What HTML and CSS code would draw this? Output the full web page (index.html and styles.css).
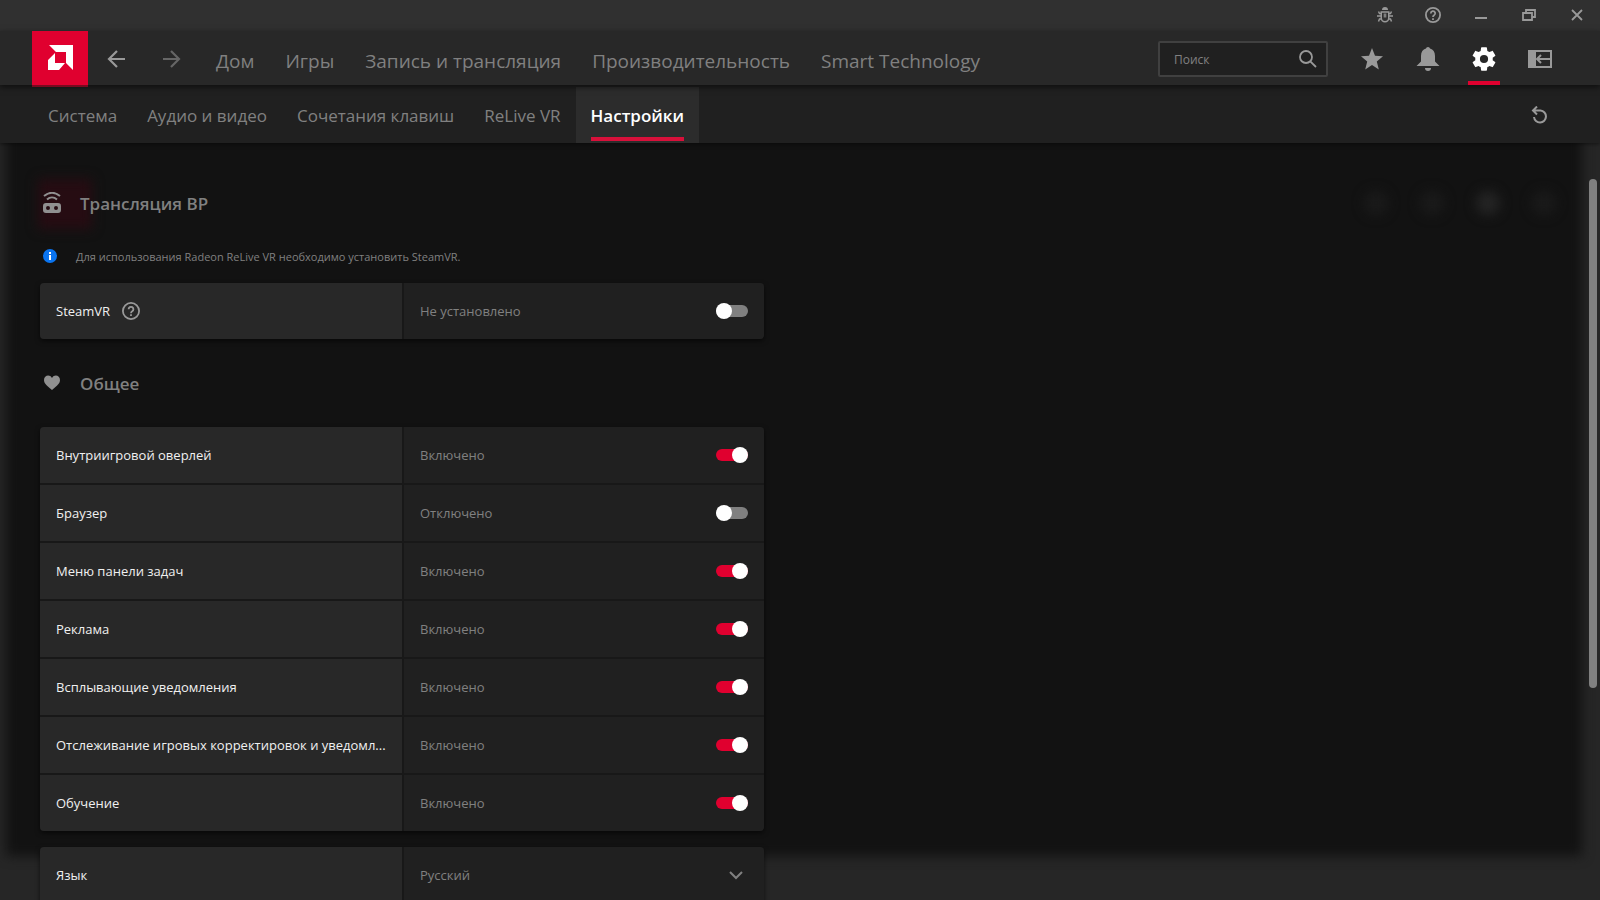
FILE: index.html
```
<!DOCTYPE html>
<html lang="ru">
<head>
    <meta charset="UTF-8">
    <meta name="viewport" content="width=device-width, initial-scale=1.0">
    <title>AMD Software</title>
    <link rel="stylesheet" href="styles.css">
</head>
<body>
    <div class="titlebar">
        <button aria-label="Сообщить об ошибке">
            <svg width="16" height="16" viewBox="0 0 16 16" fill="none" stroke="currentColor" stroke-width="1.500">
                <path d="M5 3a3 3 0 0 1 6 0z" fill="currentColor" stroke="none"/>
                <path d="M4.250 5h7.500v6a3.750 3.750 0 0 1-7.500 0z"/>
                <path d="M7.250 6.500v4M8.750 6.500v4" stroke-width="1"/>
                <path d="M4 6.500H2.500L1.500 4.500M12 6.500h1.500l1-2M0 9h4M12 9h4M4.500 12h-2l-1 2.500M11.500 12h2l1 2.500"/>
            </svg>
        </button>
        <button aria-label="Справка">
            <svg width="16" height="16" viewBox="0 0 16 16" fill="none" stroke="currentColor" stroke-width="1.800">
                <circle cx="8" cy="8" r="7.100"/>
                <path d="M5.800 6.400a2.200 2.200 0 1 1 3.300 1.900C8.300 8.800 8 9.100 8 10"/>
                <path d="M8 11.200v1.800"/>
            </svg>
        </button>
        <button aria-label="Свернуть">
            <svg width="16" height="16" viewBox="0 0 16 16" fill="currentColor"><path d="M2 10h12v2H2z"/></svg>
        </button>
        <button aria-label="Свернуть в окно">
            <svg width="16" height="16" viewBox="0 0 16 16" fill="none" stroke="currentColor" stroke-width="1.800">
                <path d="M2 6h9v7H2z"/>
                <path d="M5 5.500V3h9v7h-2.500"/>
            </svg>
        </button>
        <button aria-label="Закрыть">
            <svg width="16" height="16" viewBox="0 0 16 16" fill="none" stroke="currentColor" stroke-width="1.800"><path d="M3 3l10 10M13 3 3 13"/></svg>
        </button>
    </div>

    <header class="topbar">
        <a href="#" class="logo" aria-label="AMD">
            <svg width="25" height="25" viewBox="0 0 25 25" fill="#fff">
                <path d="M1 0h24v25l-7-7V7H8z"/>
                <path d="M7 8v10h10l-6 7H0V15z"/>
            </svg>
        </a>
        <button class="arrow" aria-label="Назад">
            <svg width="18" height="18" viewBox="0 0 18 18" fill="none" stroke="currentColor" stroke-width="2.200"><path d="M18 9H2M10 1 2 9l8 8"/></svg>
        </button>
        <button class="arrow forward" aria-label="Вперед">
            <svg width="18" height="18" viewBox="0 0 18 18" fill="none" stroke="currentColor" stroke-width="2.200"><path d="M0 9h16M8 1l8 8-8 8"/></svg>
        </button>
        <nav class="menu">
            <a href="#">Дом</a>
            <a href="#">Игры</a>
            <a href="#">Запись и трансляция</a>
            <a href="#">Производительность</a>
            <a href="#">Smart Technology</a>
        </nav>
        <div class="search">
            <input type="text" placeholder="Поиск" aria-label="Поиск">
            <svg width="18" height="18" viewBox="0 0 18 18" fill="none" stroke="currentColor" stroke-width="1.800">
                <circle cx="7" cy="7" r="6"/>
                <path d="M11.300 11.300 17 17"/>
            </svg>
        </div>
        <div class="tools">
            <button aria-label="Избранное">
                <svg width="24" height="24" viewBox="0 0 24 24" fill="currentColor"><path d="M12 1l3 7.800 8 .5-6.200 5.100 2 8L12 18l-6.800 4.400 2-8L1 9.300l8-.5z"/></svg>
            </button>
            <button aria-label="Уведомления">
                <svg width="24" height="24" viewBox="0 0 24 24" fill="currentColor">
                    <path d="M12 0c1.200 0 1.800.8 2 1.600 3.200.9 5 3.600 5 7.400v5.500L23.500 19H.5L5 14.500V9c0-3.800 1.800-6.500 5-7.400C10.200.8 10.800 0 12 0z"/>
                    <path d="M9 21h6a3 3 0 0 1-6 0z"/>
                </svg>
            </button>
            <button class="active" aria-label="Настройки">
                <svg width="28" height="28" viewBox="0 0 24 24" fill="currentColor"><path d="M19.430 12.980c.04-.32.07-.64.07-.98s-.03-.66-.07-.98l2.110-1.650c.19-.15.240-.42.120-.64l-2-3.460c-.12-.22-.39-.3-.61-.22l-2.490 1c-.52-.4-1.080-.73-1.690-.98l-.38-2.650C14.460 2.180 14.250 2 14 2h-4c-.25 0-.46.18-.49.42l-.38 2.650c-.61.25-1.170.59-1.690.98l-2.490-1c-.23-.09-.49 0-.61.22l-2 3.460c-.13.22-.07.49.12.64l2.110 1.650c-.04.32-.07.65-.07.98s.03.66.07.98l-2.110 1.650c-.19.15-.24.42-.12.64l2 3.460c.12.22.39.3.61.22l2.490-1c.52.4 1.080.73 1.690.98l.38 2.650c.03.240.240.42.490.42h4c.25 0 .46-.18.49-.42l.38-2.650c.61-.25 1.170-.59 1.690-.98l2.490 1c.23.09.49 0 .61-.22l2-3.460c.12-.22.07-.49-.12-.64zM12 15.500a3.500 3.500 0 1 1 0-7 3.500 3.500 0 0 1 0 7z"/></svg>
            </button>
            <button aria-label="Боковая панель">
                <svg width="24" height="18" viewBox="0 0 24 18" fill="none" stroke="currentColor" stroke-width="2">
                    <path d="M0 0h8v18H0z" fill="currentColor" stroke="none"/>
                    <path d="M7 1h16v16H7zM23 9H9M13 5 9 9l4 4"/>
                </svg>
            </button>
        </div>
    </header>

    <div class="subbar">
        <nav class="tabs">
            <a href="#">Система</a>
            <a href="#">Аудио и видео</a>
            <a href="#">Сочетания клавиш</a>
            <a href="#">ReLive VR</a>
            <a href="#" class="active">Настройки</a>
        </nav>
        <button class="reset" aria-label="Сбросить">
            <svg width="18" height="18" viewBox="0 0 18 18" fill="none" stroke="currentColor" stroke-width="2"><path d="M6 .5 2 4.500 6 8.500M2 4.500H9.500a6 6 0 1 1-6.500 6.500"/></svg>
        </button>
    </div>

    <main>
        <div class="backdrop">
            <div class="shade"></div>
            <div class="glow"></div>
            <div class="spots"><i></i><i></i><i class="bright"></i><i></i></div>
        </div>

        <div class="content">
            <h2>
                <svg width="22" height="22" viewBox="0 0 22 22" fill="currentColor">
                    <path fill-rule="evenodd" d="M5 11h12q3 0 3 3v4q0 3-3 3H5q-3 0-3-3v-4q0-3 3-3zm2 3a2 2 0 1 0 0 4 2 2 0 0 0 0-4zm8 0a2 2 0 1 0 0 4 2 2 0 0 0 0-4z"/>
                    <path d="M3 4c5-4 11-4 16 0M6 7.500c3-2.600 7-2.600 10 0" fill="none" stroke="currentColor" stroke-width="2"/>
                </svg>
                Трансляция ВР
            </h2>
            <p class="info">
                <svg width="14" height="14" viewBox="0 0 14 14">
                    <circle cx="7" cy="7" r="7" fill="#0a74f0"/>
                    <path d="M6 3h2v2H6zM6 6h2v5H6z" fill="#fff"/>
                </svg>
                Для использования Radeon ReLive VR необходимо установить SteamVR.
            </p>
            <div class="group">
                <div class="row">
                    <div class="name">
                        <label for="steamvr">SteamVR</label>
                        <svg width="18" height="18" viewBox="0 0 18 18" fill="none" stroke="currentColor" stroke-width="1.800">
                            <circle cx="9" cy="9" r="8.100"/>
                            <path d="M6.600 7.200a2.400 2.400 0 1 1 3.600 2.100C9.300 9.800 9 10.200 9 11.200"/>
                            <path d="M9 12.300V14"/>
                        </svg>
                    </div>
                    <div class="value"><span>Не установлено</span><input type="checkbox" id="steamvr"></div>
                </div>
            </div>

            <h2>
                <svg width="22" height="22" viewBox="0 0 22 22" fill="currentColor"><path d="M11 18C5 13 3 11 3 8c0-5 6-6 8-2 2-4 8-3 8 2 0 3-2 5-8 10z"/></svg>
                Общее
            </h2>
            <div class="group">
                <div class="row">
                    <div class="name"><label for="overlay">Внутриигровой оверлей</label></div>
                    <div class="value"><span>Включено</span><input type="checkbox" id="overlay" checked></div>
                </div>
                <div class="row">
                    <div class="name"><label for="browser">Браузер</label></div>
                    <div class="value"><span>Отключено</span><input type="checkbox" id="browser"></div>
                </div>
                <div class="row">
                    <div class="name"><label for="tray">Меню панели задач</label></div>
                    <div class="value"><span>Включено</span><input type="checkbox" id="tray" checked></div>
                </div>
                <div class="row">
                    <div class="name"><label for="ads">Реклама</label></div>
                    <div class="value"><span>Включено</span><input type="checkbox" id="ads" checked></div>
                </div>
                <div class="row">
                    <div class="name"><label for="toasts">Всплывающие уведомления</label></div>
                    <div class="value"><span>Включено</span><input type="checkbox" id="toasts" checked></div>
                </div>
                <div class="row">
                    <div class="name"><label for="tracking">Отслеживание игровых корректировок и уведомл...</label></div>
                    <div class="value"><span>Включено</span><input type="checkbox" id="tracking" checked></div>
                </div>
                <div class="row">
                    <div class="name"><label for="tutorial">Обучение</label></div>
                    <div class="value"><span>Включено</span><input type="checkbox" id="tutorial" checked></div>
                </div>
            </div>

            <div class="group">
                <div class="row">
                    <div class="name"><label for="language">Язык</label></div>
                    <div class="value select">
                        <select id="language">
                            <option>Русский</option>
                            <option>English</option>
                        </select>
                        <svg width="14" height="9" viewBox="0 0 14 9" fill="none" stroke="currentColor" stroke-width="2"><path d="M1 1l6 6 6-6"/></svg>
                    </div>
                </div>
            </div>
        </div>
        <div class="scrollbar"></div>
    </main>
</body>
</html>
```
FILE: styles.css
```
* {
    box-sizing: border-box;
}

body {
    margin: 0;
    height: 100vh;
    display: flex;
    flex-direction: column;
    overflow: hidden;
    background-color: #262626;
    color: #808080;
    font-family: "Segoe UI", "Open Sans", "Noto Sans", sans-serif;
    font-size: 13px;
}

a {
    color: inherit;
    text-decoration: none;
}

button {
    background: none;
    border: none;
    padding: 0;
    color: #999;
    cursor: pointer;
    display: flex;
    align-items: center;
    justify-content: center;
}

svg {
    flex-shrink: 0;
}

.titlebar {
    height: 31px;
    flex-shrink: 0;
    display: flex;
    justify-content: flex-end;
    background-color: #303030;
}

.titlebar button {
    width: 48px;
    height: 30px;
    padding-left: 2px;
}

.topbar {
    height: 54px;
    flex-shrink: 0;
    position: relative;
    z-index: 2;
    display: flex;
    padding: 0 32px;
    background-color: #282828;
    box-shadow: 0 2px 6px rgba(0, 0, 0, 0.6);
}

.logo {
    width: 56px;
    height: 56px;
    display: flex;
    align-items: center;
    justify-content: center;
    padding-bottom: 2px;
    background-color: #e0002f;
    border-bottom: 2px solid #7a0a20;
}

.arrow {
    width: 56px;
    height: 56px;
}

.forward {
    color: #666;
}

.menu {
    display: flex;
    gap: 31px;
    margin-left: 16px;
    font-size: 19px;
    line-height: 60px;
    white-space: nowrap;
}

.search {
    width: 170px;
    height: 36px;
    margin: 10px 16px 0 auto;
    display: flex;
    align-items: center;
    padding: 0 9px 0 14px;
    border: 2px solid #404040;
    border-radius: 2px;
    background-color: #202020;
    color: #999;
}

.search input {
    flex: 1;
    min-width: 0;
    padding: 0;
    border: none;
    outline: none;
    background: none;
    color: #fff;
    font-family: inherit;
    font-size: 12px;
}

.search input::placeholder {
    color: #808080;
}

.tools {
    display: flex;
}

.tools button {
    width: 56px;
    height: 56px;
}

.tools .active {
    height: 54px;
    padding-top: 2px;
    color: #fff;
    background: linear-gradient(#e0002f, #e0002f) center bottom / 32px 4px no-repeat;
}

.subbar {
    height: 58px;
    flex-shrink: 0;
    position: relative;
    z-index: 1;
    display: flex;
    justify-content: space-between;
    padding: 2px 32px 0 33px;
    background-color: #202020;
    box-shadow: 0 1px 4px rgba(0, 0, 0, 0.5);
}

.tabs {
    display: flex;
    height: 56px;
    font-size: 17px;
    line-height: 58px;
    white-space: nowrap;
}

.tabs a {
    padding: 0 15px;
}

.tabs .active {
    position: relative;
    background-color: #2c2c2c;
    color: #fff;
    font-weight: 600;
}

.tabs .active::after {
    content: "";
    position: absolute;
    left: 15px;
    right: 15px;
    bottom: 2px;
    height: 4px;
    background-color: #d8103a;
}

.reset {
    width: 56px;
    height: 56px;
}

main {
    flex: 1;
    min-height: 0;
    position: relative;
    overflow: hidden;
}

/* blurred window behind the settings */
.backdrop {
    position: absolute;
    inset: 0;
}

.shade {
    position: absolute;
    inset: -20px 18px 44px 6px;
    background-color: #121212;
    filter: blur(6px);
}

.glow {
    position: absolute;
    left: 38px;
    top: 36px;
    width: 54px;
    height: 50px;
    background-color: #260c12;
    filter: blur(6px);
}

.spots {
    position: absolute;
    top: 48px;
    right: 44px;
    display: flex;
    gap: 32px;
    filter: blur(6px);
}

.spots i {
    width: 24px;
    height: 24px;
    border-radius: 50%;
    background-color: #1a1a1a;
}

.spots .bright {
    background-color: #242424;
}

.content {
    position: relative;
    max-width: 804px;
    padding: 44px 40px 0;
}

h2 {
    display: flex;
    align-items: center;
    gap: 17px;
    height: 32px;
    margin: 0;
    padding-left: 1px;
    font-size: 17px;
    font-weight: 600;
}

h2 svg {
    color: #909090;
}

.info {
    display: flex;
    align-items: center;
    gap: 19px;
    height: 20px;
    margin: 27px 0 17px;
    padding-left: 3px;
    font-size: 11px;
}

.group {
    display: flex;
    flex-direction: column;
    gap: 2px;
    border-radius: 4px;
    overflow: hidden;
    background-color: #181818;
    box-shadow: 0 2px 5px rgba(0, 0, 0, 0.6);
}

.group + h2 {
    margin: 28px 0;
}

.group + .group {
    margin-top: 16px;
}

.row {
    display: grid;
    grid-template-columns: 1fr 360px;
    gap: 2px;
    height: 56px;
}

.name,
.value {
    min-width: 0;
    display: flex;
    align-items: center;
    padding: 0 16px;
}

.name {
    gap: 12px;
    background-color: #282828;
    color: #999;
}

.name label {
    white-space: nowrap;
    color: #f0f0f0;
}

.value {
    justify-content: space-between;
    background-color: #202020;
}

input[type="checkbox"] {
    appearance: none;
    position: relative;
    width: 32px;
    height: 12px;
    margin: 0;
    border-radius: 6px;
    background-color: #808080;
    cursor: pointer;
}

input[type="checkbox"]::before {
    content: "";
    position: absolute;
    left: 0;
    top: -2px;
    width: 16px;
    height: 16px;
    border-radius: 50%;
    background-color: #fff;
}

input[type="checkbox"]:checked {
    background-color: #e0002f;
}

input[type="checkbox"]:checked::before {
    left: 16px;
}

.select {
    padding-right: 21px;
}

select {
    flex: 1;
    appearance: none;
    padding: 0;
    border: none;
    outline: none;
    background: none;
    color: inherit;
    font: inherit;
}

.scrollbar {
    position: absolute;
    right: 3px;
    top: 36px;
    bottom: 28%;
    width: 8px;
    border-radius: 4px;
    background-color: #808080;
}
```
